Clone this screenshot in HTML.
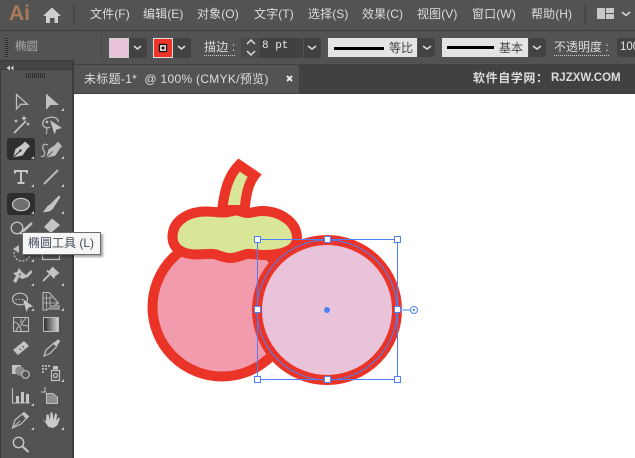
<!DOCTYPE html>
<html><head><meta charset="utf-8"><style>
html,body{margin:0;padding:0;width:635px;height:458px;overflow:hidden;background:#fff}
body{position:relative;font-family:"Liberation Sans","Noto Sans CJK SC",sans-serif;font-size:12px;color:#d8d8d8}
.a{position:absolute;white-space:nowrap}
.m{position:absolute;top:6px;line-height:16px;font-size:12px;color:#dcdcdc;letter-spacing:.1px;white-space:nowrap}
.dd{position:absolute;background:#424242;top:38px;height:20px}
svg{position:absolute;overflow:visible}
</style></head><body>
<div class="a" style="left:0;top:0;width:635px;height:30px;background:#535353"></div>
<div class="a" style="left:0;top:30px;width:635px;height:1px;background:#3c3c3c"></div>
<div class="a" style="left:0;top:31px;width:635px;height:33px;background:#535353"></div>
<div class="a" style="left:0;top:64px;width:635px;height:30px;background:#414141"></div>
<div class="a" style="left:74px;top:94px;width:561px;height:364px;background:#fff"></div>

<div class="a" style="left:9px;top:1px;font-size:21px;line-height:26px;font-weight:bold;color:#ad7a58">Ai</div>
<svg style="left:0;top:0" width="90" height="30"><path d="M43 16L52 7.500L61 16L58 16L58 23L54.500 23L54.500 18L50 18L50 23L46 23L46 16Z" fill="#cfcfcf"/><rect x="73" y="5" width="2" height="20" fill="#484848"/></svg>
<div class="m" style="left:90px">文件(F)</div>
<div class="m" style="left:143px">编辑(E)</div>
<div class="m" style="left:197px">对象(O)</div>
<div class="m" style="left:254px">文字(T)</div>
<div class="m" style="left:308px">选择(S)</div>
<div class="m" style="left:362px">效果(C)</div>
<div class="m" style="left:417px">视图(V)</div>
<div class="m" style="left:472px">窗口(W)</div>
<div class="m" style="left:531px">帮助(H)</div>
<svg style="left:580px;top:0" width="55" height="30"><rect x="4" y="5" width="2" height="20" fill="#484848"/><rect x="17" y="8" width="8" height="11" fill="#c8c8c8"/><rect x="26" y="8" width="8" height="5" fill="#c8c8c8"/><rect x="26" y="14" width="8" height="5" fill="#c8c8c8"/><path d="M42 12L46 15.500L50 12" fill="none" stroke="#d8d8d8" stroke-width="1.500"/></svg>

<!-- control bar -->
<div class="a" style="left:5px;top:38px;width:3px;height:19px;background:repeating-linear-gradient(#2f2f2f 0 1px,#5a5a5a 1px 2px)"></div>
<div class="a" style="left:15px;top:38px;font-size:11.500px;line-height:18px;color:#a9a9a9">椭圆</div>
<div class="a" style="left:101px;top:35px;width:1px;height:24px;background:#444"></div>

<div class="dd" style="left:129px;width:18px;border-radius:0 3px 3px 0"></div>
<div class="a" style="left:109px;top:38px;width:18px;height:18px;background:#e9c3da;border:1px solid #cfcfcf"></div>
<div class="dd" style="left:173px;width:18px;border-radius:0 3px 3px 0"></div>
<div class="a" style="left:153px;top:38px;width:18px;height:18px;background:#e93427;border:1px solid #ddd"></div>
<svg style="left:153px;top:38px" width="20" height="20"><rect x="6.500" y="6.500" width="7" height="7" fill="#fff" stroke="#111" stroke-width="1.300"/><rect x="8.500" y="8.500" width="3" height="3" fill="#111"/></svg>
<div class="a" style="left:204px;top:39px;font-size:12px;line-height:16px;color:#dcdcdc;border-bottom:1px dotted #ccc;letter-spacing:.2px">描边 :</div>
<div class="dd" style="left:241px;width:18px;background:#4a4a4a;border:1px solid #474747;height:18px"></div>
<div class="dd" style="left:260px;width:43px;background:#414141"></div>
<div class="dd" style="left:304px;width:17px;background:#414141"></div>
<div class="a" style="left:262px;top:39px;font-family:'Liberation Mono',monospace;font-size:11px;line-height:15px;color:#e4e4e4">8 pt</div>

<div class="a" style="left:328px;top:38px;width:89px;height:19px;background:#e4e4e4"></div>
<div class="a" style="left:334px;top:47px;width:50px;height:3px;background:#000"></div>
<div class="a" style="left:389px;top:39px;font-size:12px;line-height:18px;color:#444">等比</div>
<div class="dd" style="left:418px;width:17px;border-radius:0 3px 3px 0;height:19px"></div>
<div class="a" style="left:442px;top:38px;width:86px;height:19px;background:#e4e4e4"></div>
<div class="a" style="left:447px;top:46px;width:47px;height:3px;background:#000"></div>
<div class="a" style="left:499px;top:39px;font-size:12px;line-height:18px;color:#444">基本</div>
<div class="dd" style="left:529px;width:17px;border-radius:0 3px 3px 0;height:19px"></div>
<svg style="left:0;top:0" width="635" height="64"><g fill="none" stroke="#dcdcdc" stroke-width="1.500"><path d="M134 46L137.500 49L141 46M178 46L181.500 49L185 46M308 46L312 49L316 46M423 46L427 49L431 46M533 46L537 49L541 46"/><path d="M247 44L251 40L255 44M247 51L251 55L255 51"/></g></svg>
<div class="a" style="left:554px;top:39px;font-size:12px;line-height:16px;color:#dcdcdc;border-bottom:1px dotted #ccc">不透明度 :</div>
<div class="dd" style="left:617px;width:18px;height:19px;border-radius:3px 0 0 3px"></div>
<div class="a" style="left:620px;top:40px;font-size:11.500px;line-height:15px;color:#e4e4e4">100</div>

<!-- tab -->
<div class="a" style="left:74px;top:65px;width:225px;height:28px;background:#535353"></div>
<div class="a" style="left:84px;top:71px;font-size:12px;line-height:16px;color:#dedede;letter-spacing:.3px">未标题-1* &nbsp;@ 100% (CMYK/预览)</div>
<svg style="left:286px;top:75px" width="8" height="8"><path d="M1 1L6 6M6 1L1 6" stroke="#e6e6e6" stroke-width="2"/></svg>
<div class="a" style="left:473px;top:70px;font-size:12px;line-height:16px;font-weight:bold;color:#dcdcdc;letter-spacing:.6px">软件自学网：</div>
<div class="a" style="left:551px;top:70px;font-size:11.500px;line-height:16px;font-weight:bold;color:#dcdcdc">RJZXW.COM</div>

<!-- toolbar -->
<div class="a" style="left:0;top:60px;width:74px;height:398px;background:#3d3d3d"></div>
<div class="a" style="left:1px;top:70px;width:71px;height:388px;background:#535353"></div>
<div class="a" style="left:0;top:61px;width:72px;height:8px;background:#454545"></div>
<svg style="left:0;top:60px" width="74" height="30"><path d="M10 5.500L6.500 8L10 10.500ZM13.500 5.500L10.500 8L13.500 10.500Z" fill="#d0d0d0"/></svg>
<div class="a" style="left:26px;top:73px;width:20px;height:5px;background:repeating-linear-gradient(90deg,#2c2c2c 0 1px,#555 1px 2px)"></div>
<div class="a" style="left:7px;top:138px;width:28px;height:22px;background:#2e2e2e;border-radius:3px"></div>
<div class="a" style="left:7px;top:193px;width:28px;height:22px;background:#2e2e2e;border-radius:3px"></div>

<svg style="left:0;top:85px" width="74" height="373" viewBox="0 85 74 373">
<defs><linearGradient id="g"><stop offset="0" stop-color="#2a2a2a"/><stop offset="1" stop-color="#d8d8d8"/></linearGradient></defs>
<!-- row 1 -->
<path d="M16.500 94.500L16.500 109L20.800 104.300L27.500 104.300Z" fill="none" stroke="#bdbdbd" stroke-width="1.300"/>
<path d="M46 93.500L46 110L50.500 105L59 105Z" fill="#c0c0c0"/>
<!-- row 2: wand, lasso -->
<path d="M14 133L26 121" stroke="#c0c0c0" stroke-width="1.800" fill="none"/>
<path d="M24 115.500l.9 1.900 1.900.9-1.900.9-.9 1.900-.9-1.900-1.900-.9 1.900-.9zM28 122l.7 1.300 1.300.7-1.300.7-.7 1.300-.7-1.300-1.300-.7 1.300-.7zM16 119l.7 1.300 1.300.7-1.300.7-.7 1.300-.7-1.300-1.300-.7 1.300-.7z" fill="#c6c6c6"/>
<path d="M58 122C59 118 53 116.500 49 117.500C44 118.500 42 122 43 125C44 128 48 128.500 50 127" fill="none" stroke="#bdbdbd" stroke-width="1.300"/>
<path d="M47 128C46 130 48 131 46 134" fill="none" stroke="#bdbdbd" stroke-width="1"/>
<path d="M50 120L62 128L56.500 129.500L54.500 134.500Z" fill="#c4c4c4"/>
<circle cx="47" cy="122" r="1.300" fill="#c4c4c4"/>
<!-- row 3: pen, curvature -->
<path d="M13 157.500L15.500 149L22 144.500L25 141.500L30 146L27 149L22.500 155.500Z" fill="#c8c8c8"/>
<path d="M13.500 157L20 151" stroke="#2e2e2e" stroke-width="1"/><circle cx="20.500" cy="150.500" r="1.200" fill="#2e2e2e"/>
<path d="M46 158L48.500 149.500L55 145L58 141.500L62 146L59.500 149L55.500 155.500Z" fill="#bcbcbc"/>
<path d="M46.500 157.500L52.500 151.500" stroke="#535353" stroke-width="1"/>
<path d="M48 145C42 142 42 148 44 151C46 154 43 158 41 156" fill="none" stroke="#bdbdbd" stroke-width="1.200"/>
<!-- row 4 -->
<path d="M15 173.500V171H27V173.500M21 171V183M17.500 183H24.500" fill="none" stroke="#c6c6c6" stroke-width="2"/>
<path d="M44 184L58 170" stroke="#b8b8b8" stroke-width="2"/>
<!-- row 5 -->
<ellipse cx="21" cy="204.500" rx="8.500" ry="6.200" fill="#6e6e6e" stroke="#c8c8c8" stroke-width="1.200"/>
<path d="M43 212C46.500 208 47 205.500 50 204.500L59 195.500L60.500 197L54 207C52.500 211 47 212.500 43 212Z" fill="#c4c4c4"/>
<!-- row 6 -->
<circle cx="17" cy="228" r="5.800" fill="none" stroke="#bdbdbd" stroke-width="1.400"/>
<path d="M20 234L32 223" stroke="#c0c0c0" stroke-width="2.600"/>
<path d="M44 227L52 218.500L60 225L51 233Z" fill="#c4c4c4"/>
<!-- row 7 -->
<path d="M13 249L19 245V253Z" fill="#bdbdbd"/>
<path d="M14 252A8 8 0 0 0 30 254" fill="none" stroke="#bdbdbd" stroke-width="1.300" stroke-dasharray="2 1.500"/>
<rect x="42.500" y="253.500" width="17" height="6" fill="none" stroke="#bdbdbd" stroke-width="1.200"/>
<!-- row 8: puppet warp, pin -->
<path d="M13 281L16 276L13 273L17 272L19 268L22 272L26 275L31 270L32.500 272L28 277L22 279L19 277L16 283Z" fill="#c0c0c0"/>
<circle cx="20" cy="274.500" r="1" fill="#535353"/>
<path d="M43 281L49.500 274.500M47 270.500L54.500 278M49 272.500L52.500 268L58 273L53.500 276.500Z" stroke="#c4c4c4" stroke-width="1.800" fill="#c4c4c4"/>
<!-- row 9 -->
<ellipse cx="20" cy="299" rx="7.500" ry="5.800" fill="none" stroke="#bdbdbd" stroke-width="1.200"/>
<path d="M15.500 299.500H24" stroke="#bdbdbd" stroke-dasharray="1.500 1.500"/>
<path d="M23 299L33 306.500L28.500 307.500L26.500 312Z" fill="#c8c8c8"/>
<path d="M43 292.500V310H47L58.500 303L49 292.500Z" fill="none" stroke="#bdbdbd" stroke-width="1.100"/>
<path d="M46.500 294V310M43 298H52.500M43 303H57M50 296V308" fill="none" stroke="#bdbdbd" stroke-width=".8"/>
<path d="M50 310V305H60V310Z" fill="#8c8c8c"/>
<!-- row 10 -->
<rect x="13.500" y="317.500" width="15" height="14" fill="none" stroke="#bdbdbd" stroke-width="1.100"/>
<path d="M21 331C21 325 16 322 13.500 322M21 325C23 321 25 320 26 317.500M21 325C24 325 26 326 28.500 326M16 331C17 328 18 327 19 326.500M21 319V323" fill="none" stroke="#bdbdbd" stroke-width="1"/>
<rect x="43.500" y="317.500" width="15" height="14" fill="url(#g)" stroke="#bbb"/>
<!-- row 11 -->
<path d="M13 350L24 341L29 346L18 355Z" fill="#c4c4c4"/>
<path d="M19.500 348.500L21 350M22.500 346L24 347.500" stroke="#535353" stroke-width="1"/>
<path d="M44 356L46 350L54 343L57 346L50 353.500Z" fill="none" stroke="#c0c0c0" stroke-width="1.200"/>
<path d="M53 343.500L57 340C59 339 60.500 340.500 59.500 342.500L56 346.500Z" fill="#c4c4c4"/>
<!-- row 12 -->
<rect x="12" y="365" width="9" height="9" fill="#c4c4c4"/>
<circle cx="20" cy="371" r="4.800" fill="#8b8b8b"/>
<circle cx="25.500" cy="374.500" r="3.800" fill="#535353" stroke="#c0c0c0" stroke-width="1.200"/>
<path d="M42 365h2v2h-2zM45 365h2v2h-2zM48 365h2v2h-2zM42 368h2v2h-2zM45 368h2v2h-2zM42 371h2v2h-2z" fill="#b0b0b0"/>
<rect x="51.500" y="370.500" width="8" height="10" fill="none" stroke="#c0c0c0" stroke-width="1.200"/>
<rect x="53" y="366" width="5" height="3.500" fill="#c4c4c4"/>
<circle cx="55.500" cy="375.500" r="2" fill="none" stroke="#c0c0c0" stroke-width="1.200"/>
<!-- row 13 -->
<path d="M12.500 388V403H30" fill="none" stroke="#bdbdbd" stroke-width="1.100"/>
<path d="M16 396h3v7h-3zM21 392h3v11h-3zM26 394h3v9h-3z" fill="#c4c4c4"/>
<path d="M41 392H46M45 387V392" stroke="#c4c4c4" stroke-width="1" fill="none"/>
<path d="M46.500 393.500H53L57.500 397.500V403.500H46.500Z" fill="#8e8e8e" stroke="#c0c0c0" stroke-width="1"/>
<!-- row 14 -->
<path d="M12.500 428L15 420L24 412.500L28.500 416.500L21 424Z" fill="none" stroke="#c0c0c0" stroke-width="1.200"/>
<path d="M22 414L24 412.500L28.500 416.500L26 419Z" fill="#c4c4c4"/>
<path d="M13 427.500L20 421" stroke="#c0c0c0"/>
<path d="M43 419L46 421.500L46.500 414.500L48.500 414.500L50 420L50.500 412.500L52.500 412.500L53.500 420L55 413.500L57 414L56.500 421L58.500 417.500L60 418.500L57.500 425L53.500 428L48.500 427Z" fill="#cacaca"/>
<!-- row 15 -->
<circle cx="18.500" cy="442.500" r="5.200" fill="none" stroke="#c6c6c6" stroke-width="1.400"/>
<path d="M22.500 446.500L28.500 452" stroke="#c6c6c6" stroke-width="2.200"/>
<!-- corner triangles -->
<path fill="#c6c6c6" d="M61 111h3v-3ZM31 159h3v-3ZM61 159h3v-3ZM31 187h3v-3ZM61 187h3v-3ZM31 214h3v-3ZM61 214h3v-3ZM31 262h3v-3ZM31 286h3v-3ZM61 286h3v-3ZM31 311h3v-3ZM61 311h3v-3ZM61 382h3v-3ZM31 406h3v-3ZM31 430h3v-3ZM61 430h3v-3Z"/>
</svg>

<!-- artwork -->
<svg style="left:0;top:0" width="635" height="458" viewBox="0 0 635 458">
<circle cx="222" cy="307" r="69.500" fill="#f29bac" stroke="#e93427" stroke-width="10"/>
<path d="M222 210C225 188 229 175 239 165L254.500 175.500C248 184 246 195 244.500 210Z" fill="#d9e597" stroke="#e93427" stroke-width="10" stroke-miterlimit="10"/>
<path d="M172.500 237C172.500 221 188 211.500 206 211.500C213 211.500 218 212.500 223 212.500C229 212.500 232 210.500 236 210.500C240 210.500 243 213 248 213C252 213 256 211 262 211C280 211 297 222 297 238C297 249 285 255 264 255C257 255 252 253.500 247 254C242 255 237 258 230 258C223 258 219 254.500 213 254C208 253.500 203 254.500 197 254.500C183 254.500 172.500 249 172.500 237Z" fill="#d9e597" stroke="#e93427" stroke-width="10"/>
<circle cx="327" cy="310" r="70" fill="#e9c3da" stroke="#e93427" stroke-width="10"/>
<circle cx="327" cy="310" r="70" fill="none" stroke="#4f80f5" stroke-width="1"/>
<rect x="257.500" y="239.500" width="140" height="140" fill="none" stroke="#4f80f5" stroke-width="1"/>
<path d="M398 310H411" stroke="#a9c0f7" stroke-width="2"/>
<circle cx="414" cy="310" r="3.500" fill="#fff" stroke="#4f80f5" stroke-width="1"/><circle cx="414" cy="310" r="1.200" fill="#4f80f5"/>
<circle cx="327" cy="310" r="3" fill="#4f80f5"/>
<g fill="#fff" stroke="#4f80f5" stroke-width="1">
<rect x="254.500" y="236.500" width="6" height="6"/><rect x="324.500" y="236.500" width="6" height="6"/><rect x="394.500" y="236.500" width="6" height="6"/>
<rect x="254.500" y="306.500" width="6" height="6"/><rect x="394.500" y="306.500" width="6" height="6"/>
<rect x="254.500" y="376.500" width="6" height="6"/><rect x="324.500" y="376.500" width="6" height="6"/><rect x="394.500" y="376.500" width="6" height="6"/>
</g>
</svg>

<!-- tooltip -->
<div class="a" style="left:22px;top:232px;width:77px;height:21px;background:#f6f6f6;border:1px solid #6b6b6b;box-shadow:2px 2px 2px rgba(0,0,0,.35)"></div>
<div class="a" style="left:28px;top:235px;font-size:12px;line-height:16px;color:#3f4a58">椭圆工具 (L)</div>
</body></html>
